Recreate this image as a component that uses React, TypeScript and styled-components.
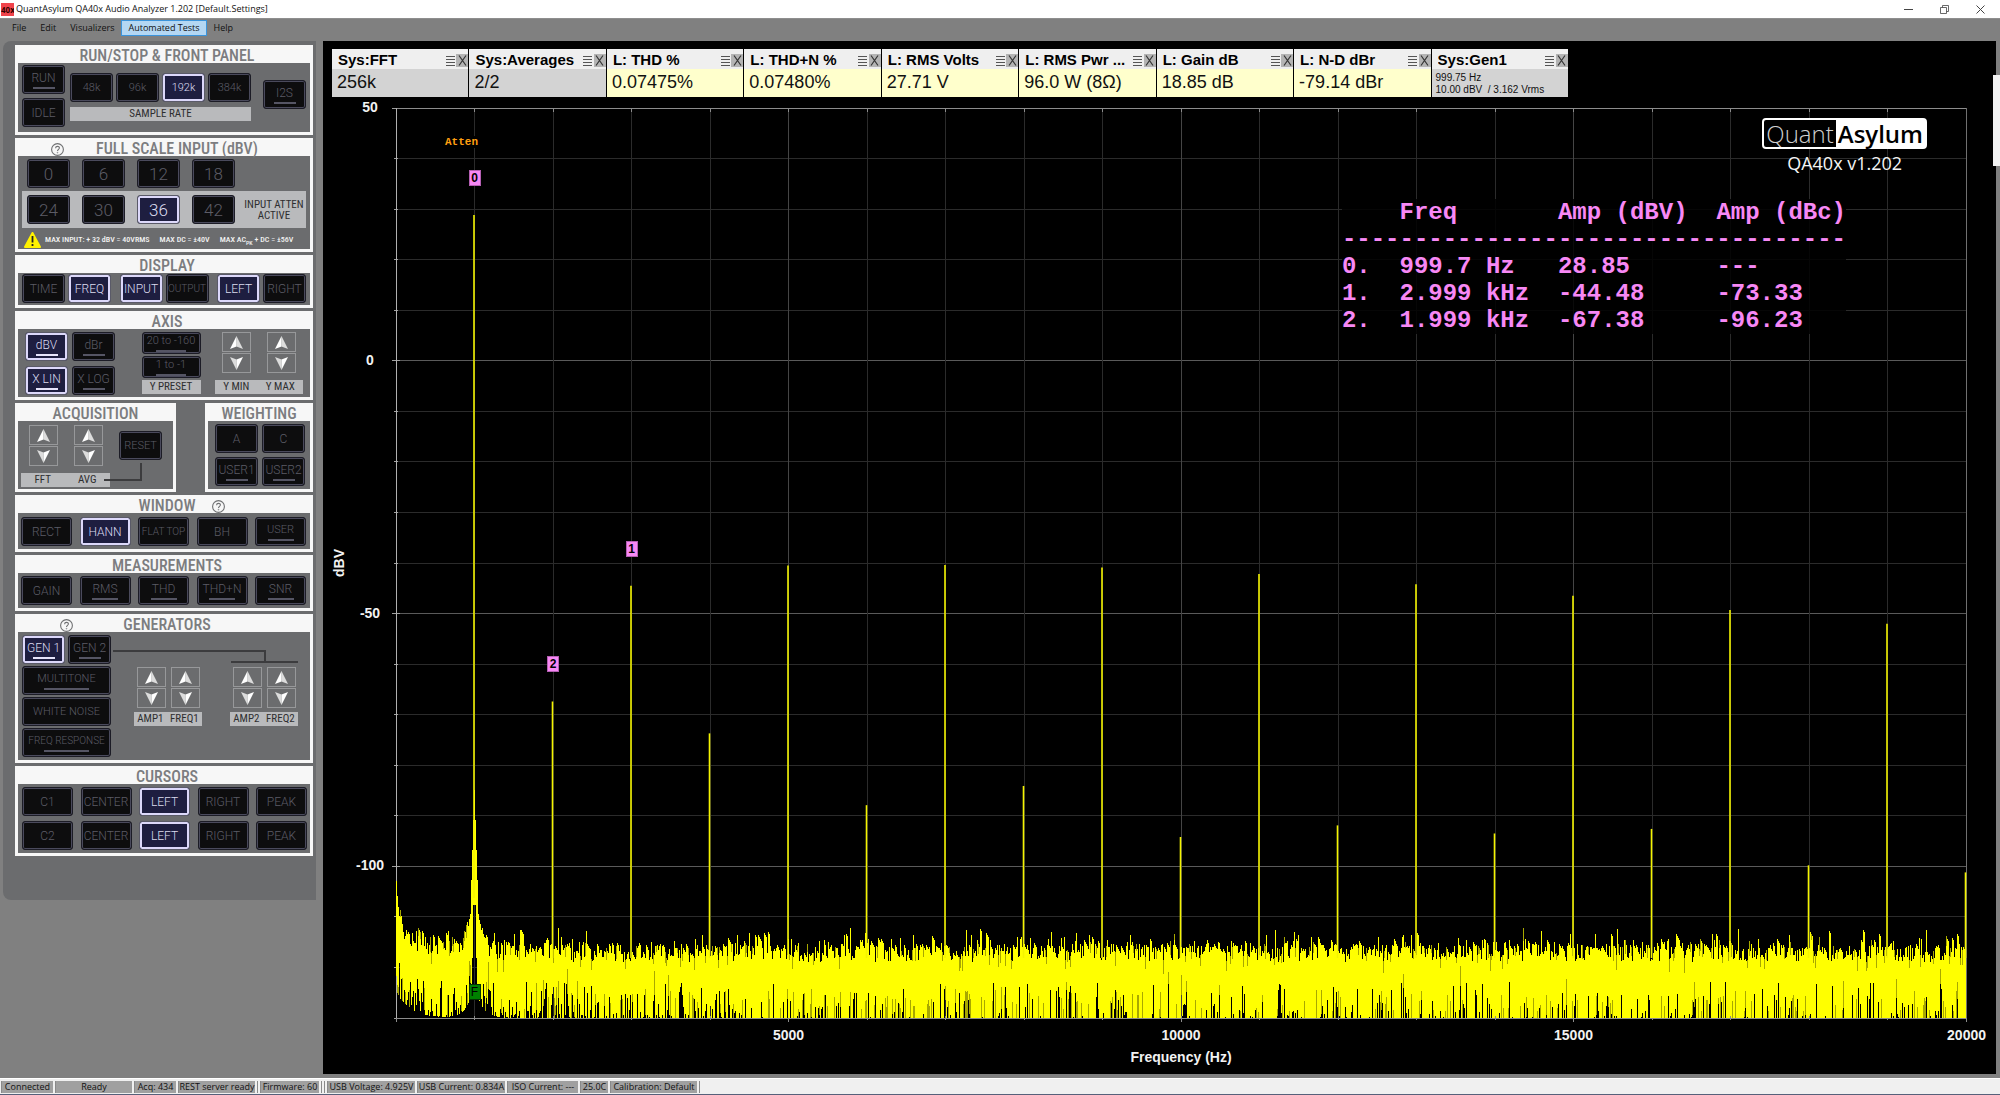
import React from "react";
import styled, { createGlobalStyle, css } from "styled-components";

const GlobalStyle = createGlobalStyle`
  * { box-sizing: border-box; }
  body { margin: 0; background: #808080; }
  button { font: inherit; padding: 0; margin: 0; border: 0; background: none; }
  h1, h2 { margin: 0; font-weight: 400; }
`;

const UI = `"Open Sans", "Noto Sans", sans-serif`;
const ARIAL = `"Liberation Sans", Arial, sans-serif`;
const NARROW = `"Liberation Sans Narrow", "Arial Narrow", "Roboto Condensed", "DejaVu Sans Condensed", sans-serif`;
const KEY = `Roboto, "Liberation Sans", sans-serif`;
const MONO = `"Liberation Mono", "Courier New", monospace`;

const Shell = styled.div`
  display: flex;
  flex-direction: column;
  min-height: 100vh;
  background: #808080;
  font-family: ${UI};
`;

/* ---------- window chrome ---------- */

const TitleBar = styled.header`
  display: flex;
  align-items: center;
  height: 18px;
  padding: 0 14px 0 1px;
  background: #fff;
`;
const AppBadge = styled.span`
  width: 13px;
  height: 13px;
  overflow: hidden;
  background: #f0434b;
  color: #300;
  font: 700 8px/13px ${UI};
  text-align: center;
`;
const Title = styled.h1`
  flex: 1;
  margin-left: 2px;
  color: #111;
  font-size: 9px;
  line-height: 18px;
`;
const WindowButtons = styled.div`
  display: flex;
  gap: 24px;
`;
const WindowButton = styled.button`
  display: flex;
  align-items: center;
  justify-content: center;
  width: 12px;
  height: 16px;
`;
const MenuBar = styled.nav`
  display: flex;
  align-items: flex-start;
  height: 23px;
  padding: 1px 5px;
  border-top: 1px solid #8e8e8e;
`;
const MenuItem = styled.button<{ $active?: boolean }>`
  height: 16px;
  padding: 0 6px;
  border: 1px solid ${(p) => (p.$active ? "#3a94dc" : "transparent")};
  background: ${(p) => (p.$active ? "#b4d7f3" : "transparent")};
  color: #111;
  font-size: 9px;
  line-height: 12px;
`;
const Main = styled.main`
  display: flex;
  flex: 1;
  gap: 7px;
  padding: 0 4px 4px 3px;
`;

/* ---------- control panel ---------- */

const Sidebar = styled.aside`
  display: flex;
  flex: none;
  flex-direction: column;
  align-self: flex-start;
  gap: 3px;
  width: 313px;
  padding: 4px 3px 44px 12px;
  border-radius: 8px 0 0 8px;
  background: #6b6c6e;
`;
const Panel = styled.section<{ $w?: number }>`
  ${(p) => (p.$w ? `width: ${p.$w}px;` : "")}
  border: 3px solid #f7f7f7;
  background: #6b6c6e;
`;
const PanelHead = styled.header<{ $indent: number }>`
  display: grid;
  grid-template-columns: 1fr auto 1fr;
  align-items: center;
  height: 15px;
  padding-left: ${(p) => p.$indent}px;
  background: #f7f7f7;
`;
const PanelTitle = styled.h2`
  grid-column: 2;
  color: #7c7d80;
  font: 500 16px/16px ${NARROW};
  white-space: nowrap;
`;
const HelpButton = styled.button<{ $side: "left" | "right"; $gap: number }>`
  display: flex;
  grid-row: 1;
  grid-column: ${(p) => (p.$side === "left" ? 1 : 3)};
  justify-self: ${(p) => (p.$side === "left" ? "end" : "start")};
  margin: ${(p) => (p.$side === "left" ? `0 ${p.$gap}px 0 0` : `0 0 0 ${p.$gap}px`)};
`;
const PanelBody = styled.div<{ $pad: string; $between?: boolean }>`
  display: flex;
  justify-content: ${(p) => (p.$between ? "space-between" : "flex-start")};
  padding: ${(p) => p.$pad};
`;
const Row = styled.div<{ $gap?: number; $pad?: string; $between?: boolean }>`
  display: flex;
  gap: ${(p) => p.$gap ?? 0}px;
  padding: ${(p) => p.$pad ?? "0"};
  justify-content: ${(p) => (p.$between ? "space-between" : "flex-start")};
`;
const Stack = styled.div<{ $gap?: number; $pad?: string; $grow?: boolean }>`
  display: flex;
  flex-direction: column;
  gap: ${(p) => p.$gap ?? 0}px;
  padding: ${(p) => p.$pad ?? "0"};
  ${(p) => (p.$grow ? "flex: 1;" : "")}
`;

const KeyCap = styled.button<{ $w: number; $h: number; $size: number; $on?: boolean; $lamp?: boolean }>`
  display: flex;
  flex: none;
  flex-direction: column;
  align-items: center;
  justify-content: center;
  gap: 2px;
  width: ${(p) => p.$w}px;
  height: ${(p) => p.$h}px;
  overflow: hidden;
  border: 1px solid ${(p) => (p.$on ? "#5a5a68" : "#1c1c26")};
  border-radius: 3px;
  background: ${(p) => (p.$on ? "#1e1e40" : "#0d0d0e")};
  box-shadow: inset 0 0 0 ${(p) => (p.$on ? 2 : 1)}px ${(p) => (p.$on ? "#dcd8fa" : "#4a4a5c")};
  color: ${(p) => (p.$on ? "#dcdcf0" : "#5c5c66")};
  font: 300 ${(p) => p.$size}px/14px ${KEY};
  white-space: nowrap;
  ${(p) =>
    p.$lamp &&
    css`
      &::after {
        content: "";
        width: ${p.$w > 80 ? 45 : p.$w === 59 ? 30 : p.$w > 50 ? 26 : 22}px;
        height: 2px;
        background: ${p.$on ? "#e6e4fa" : "#555564"};
      }
    `}
`;

const Plate = styled.div<{ $w?: number }>`
  display: flex;
  justify-content: space-around;
  ${(p) => (p.$w ? `width: ${p.$w}px;` : "")}
  height: 14px;
  background: #b9babc;
  color: #2e2e30;
  font: 400 11px/14px ${NARROW};
`;
const AttenStrip = styled.div`
  display: flex;
  align-items: center;
  gap: 12px;
  margin: 0 4px;
  padding: 4px 5px;
  background: #b9babc;
`;
const AttenText = styled.div`
  flex: 1;
  margin: 0 -5px;
  color: #2e2e30;
  font: 400 11px/11px ${NARROW};
  text-align: center;
`;
const WarningLine = styled.div`
  display: flex;
  align-items: center;
  gap: 10px;
  height: 18px;
  padding: 0 6px;
  color: #f4f4f4;
  font: 500 8px/10px ${NARROW};
  white-space: nowrap;
  & > svg { margin-right: -6px; }
`;
const Sub = styled.sub`
  font-size: 6px;
  line-height: 1px;
`;
const StepButton = styled.button`
  display: flex;
  align-items: center;
  justify-content: center;
  width: 29px;
  height: 20px;
  border: 1px solid #97989a;
`;

type KeyProps = { label: string; w?: number; h?: number; size?: number; on?: boolean; lamp?: boolean };
const Key = ({ label, w = 43, h = 29, size = 12, on, lamp }: KeyProps) => (
  <KeyCap type="button" aria-pressed={!!on} $w={w} $h={h} $size={size} $on={on} $lamp={lamp}>
    {label}
  </KeyCap>
);

const Arrow = ({ down }: { down?: boolean }) => (
  <svg width="13" height="13" viewBox="0 0 13 13" aria-hidden="true">
    <g transform={down ? "rotate(180 6.5 6.5)" : undefined}>
      <path d="M6.5 0 L13 13 L6.5 10.5 Z" fill="#dcdcdc" />
      <path d="M6.5 0 L0 13 L6.5 10.5 Z" fill="#fff" />
    </g>
  </svg>
);

const Stepper = ({ name }: { name: string }) => (
  <Stack $gap={1}>
    <StepButton type="button" aria-label={`${name} up`}>
      <Arrow />
    </StepButton>
    <StepButton type="button" aria-label={`${name} down`}>
      <Arrow down />
    </StepButton>
  </Stack>
);

const Help = ({ side, gap }: { side: "left" | "right"; gap: number }) => (
  <HelpButton type="button" aria-label="Help" $side={side} $gap={gap}>
    <svg width="13" height="13" viewBox="0 0 13 13" fill="none" stroke="#6f7072">
      <circle cx="6.5" cy="6.5" r="5.9" strokeWidth="1.1" />
      <path d="M4.6 5.2 C4.6 2.7 8.5 2.8 8.4 5 C8.3 6.3 6.5 6.4 6.5 8" strokeWidth="1.1" />
      <circle cx="6.5" cy="9.7" r=".4" strokeWidth=".7" />
    </svg>
  </HelpButton>
);

const Head = ({ title, indent = 6, children }: { title: string; indent?: number; children?: React.ReactNode }) => (
  <PanelHead $indent={indent}>
    <PanelTitle>{title}</PanelTitle>
    {children}
  </PanelHead>
);

const ControlPanel = () => (
  <Sidebar>
    <Panel>
      <Head title="RUN/STOP & FRONT PANEL" />
      <PanelBody $pad="2px 4px 5px">
        <Stack $gap={4}>
          <Key label="RUN" lamp />
          <Key label="IDLE" />
        </Stack>
        <Stack $gap={5} $pad="8px 12px 0 5px">
          <Row $gap={3}>
            <Key label="48k" size={11} />
            <Key label="96k" size={11} />
            <Key label="192k" size={11} on />
            <Key label="384k" size={11} />
          </Row>
          <Plate>SAMPLE RATE</Plate>
        </Stack>
        <Stack $pad="15px 0 0">
          <Key label="I2S" lamp />
        </Stack>
      </PanelBody>
    </Panel>

    <Panel>
      <Head title="FULL SCALE INPUT (dBV)" indent={26}>
        <Help side="left" gap={32} />
      </Head>
      <Stack $gap={3} $pad="3px 0 0">
        <Row $gap={12} $pad="0 9px">
          {["0", "6", "12", "18"].map((v) => (
            <Key key={v} label={v} size={17} />
          ))}
        </Row>
        <AttenStrip>
          {["24", "30", "36", "42"].map((v) => (
            <Key key={v} label={v} size={17} on={v === "36"} />
          ))}
          <AttenText>INPUT ATTEN ACTIVE</AttenText>
        </AttenStrip>
        <WarningLine>
          <svg width="17" height="16" viewBox="0 0 17 16" aria-hidden="true">
            <path d="M8.5 1 L16 15 L1 15 Z" fill="#fff200" stroke="#fff200" strokeWidth="2" strokeLinejoin="round" />
            <path d="M8.5 4 V10.5 M8.5 12 V14" stroke="#222" strokeWidth="1.8" />
          </svg>
          <span>MAX INPUT: + 32 dBV = 40VRMS</span>
          <span>MAX DC = ±40V</span>
          <span>
            MAX AC<Sub>PK</Sub> + DC = ±56V
          </span>
        </WarningLine>
      </Stack>
    </Panel>

    <Panel>
      <Head title="DISPLAY" />
      <PanelBody $pad="1px 4px 2px" $between>
        <Row $gap={3}>
          <Key label="TIME" />
          <Key label="FREQ" on />
        </Row>
        <Row $gap={3}>
          <Key label="INPUT" on />
          <Key label="OUTPUT" size={10} />
        </Row>
        <Row $gap={3}>
          <Key label="LEFT" on />
          <Key label="RIGHT" />
        </Row>
      </PanelBody>
    </Panel>

    <Panel>
      <Head title="AXIS" />
      <PanelBody $pad="3px 7px 2px 7px" $between>
        <Stack $gap={5}>
          <Row $gap={4}>
            <Key label="dBV" on lamp />
            <Key label="dBr" lamp />
          </Row>
          <Row $gap={4}>
            <Key label="X LIN" on lamp />
            <Key label="X LOG" lamp />
          </Row>
        </Stack>
        <Stack $gap={2} $pad="0 0 0 12px">
          <Key label="20 to -160" w={59} h={22} size={11} lamp />
          <Key label="1 to -1" w={59} h={22} size={11} lamp />
          <Plate>Y PRESET</Plate>
        </Stack>
        <Stack $gap={7}>
          <Row $pad="0 7px" $between>
            <Stepper name="Y min" />
            <Stepper name="Y max" />
          </Row>
          <Plate $w={88}>
            <span>Y MIN</span>
            <span>Y MAX</span>
          </Plate>
        </Stack>
      </PanelBody>
    </Panel>

    <Row $between>
      <Panel $w={161}>
        <Head title="ACQUISITION" indent={0} />
        <PanelBody $pad="4px 3px 2px">
          <Stack $gap={7}>
            <Row $gap={16} $pad="0 7px 0 8px">
              <Stepper name="FFT" />
              <Stepper name="Average" />
            </Row>
            <Plate $w={89}>
              <span>FFT</span>
              <span>AVG</span>
            </Plate>
          </Stack>
          <Stack $pad="6px 0 0 9px">
            <Key label="RESET" size={11} />
            <svg width="43" height="24" viewBox="0 0 43 24" overflow="visible" aria-hidden="true">
              <path d="M22 3 V20 H-15" fill="none" stroke="#3c3c3e" strokeWidth="2" />
            </svg>
          </Stack>
        </PanelBody>
      </Panel>
      <Panel $w={108}>
        <Head title="WEIGHTING" indent={0} />
        <PanelBody $pad="3px 7px 3px">
          <Stack $gap={4}>
            <Row $gap={4}>
              <Key label="A" />
              <Key label="C" />
            </Row>
            <Row $gap={4}>
              <Key label="USER1" lamp />
              <Key label="USER2" lamp />
            </Row>
          </Stack>
        </PanelBody>
      </Panel>
    </Row>

    <Panel>
      <Head title="WINDOW">
        <Help side="right" gap={17} />
      </Head>
      <PanelBody $pad="4px 4px 3px 3px" $between>
        <Key w={51} label="RECT" />
        <Key w={51} label="HANN" on />
        <Key w={51} label="FLAT TOP" size={10} />
        <Key w={51} label="BH" />
        <Key w={51} label="USER" size={11} lamp />
      </PanelBody>
    </Panel>

    <Panel>
      <Head title="MEASUREMENTS" />
      <PanelBody $pad="3px 4px 3px 3px" $between>
        <Key w={51} label="GAIN" />
        <Key w={51} label="RMS" lamp />
        <Key w={51} label="THD" lamp />
        <Key w={51} label="THD+N" lamp />
        <Key w={51} label="SNR" lamp />
      </PanelBody>
    </Panel>

    <Panel>
      <Head title="GENERATORS">
        <Help side="left" gap={50} />
      </Head>
      <PanelBody $pad="3px 11px 3px 4px">
        <Stack $gap={2}>
          <Row $gap={3}>
            <Key label="GEN 1" on lamp />
            <Key label="GEN 2" lamp />
          </Row>
          <Key w={89} label="MULTITONE" size={11} lamp />
          <Key w={89} label="WHITE NOISE" size={11} />
          <Key w={89} label="FREQ RESPONSE" size={10} lamp />
        </Stack>
        <Stack $grow $gap={4} $pad="10px 0 0 2px">
          <svg width="100%" height="18" overflow="visible" aria-hidden="true">
            <path d="M0 6 H152 V17 M118 17 H185" fill="none" stroke="#3c3c3e" strokeWidth="2" />
          </svg>
          <Row $between $pad="0 0 0 21px">
            <Stack $gap={4}>
              <Row $gap={5} $pad="0 3px">
                <Stepper name="Amp 1" />
                <Stepper name="Freq 1" />
              </Row>
              <Plate $w={68}>
                <span>AMP1</span>
                <span>FREQ1</span>
              </Plate>
            </Stack>
            <Stack $gap={4}>
              <Row $gap={5} $pad="0 3px">
                <Stepper name="Amp 2" />
                <Stepper name="Freq 2" />
              </Row>
              <Plate $w={68}>
                <span>AMP2</span>
                <span>FREQ2</span>
              </Plate>
            </Stack>
          </Row>
        </Stack>
      </PanelBody>
    </Panel>

    <Panel>
      <Head title="CURSORS" />
      <Stack $gap={5} $pad="3px 3px 3px 4px">
        {["C1", "C2"].map((c) => (
          <Row key={c} $between>
            <Key w={51} label={c} />
            <Key w={51} label="CENTER" />
            <Key w={51} label="LEFT" on />
            <Key w={51} label="RIGHT" />
            <Key w={51} label="PEAK" />
          </Row>
        ))}
      </Stack>
    </Panel>
  </Sidebar>
);

/* ---------- read-out cards ---------- */

const Scope = styled.section`
  position: relative;
  display: flex;
  flex: 1;
  flex-direction: column;
  min-width: 0;
  background: #000;
`;
const Cards = styled.div`
  display: grid;
  grid-template-columns: repeat(9, 1fr);
  gap: 1px;
  max-width: 1254px;
  padding: 8px 9px 11px;
`;
const Card = styled.article`
  display: flex;
  flex-direction: column;
  min-width: 0;
  height: 48px;
`;
const CardHead = styled.header`
  display: flex;
  align-items: center;
  height: 20px;
  padding: 2px 0 0 6px;
  background: #efefef;
`;
const CardTitle = styled.h2`
  flex: 1;
  overflow: hidden;
  color: #000;
  font: 700 15px/18px ${ARIAL};
  white-space: nowrap;
`;
const CardButton = styled.button<{ $boxed?: boolean }>`
  display: flex;
  align-items: center;
  justify-content: center;
  width: 12px;
  height: 13px;
  background: ${(p) => (p.$boxed ? "#b4b4b4" : "transparent")};
`;
const CardValue = styled.div<{ $tone: "gray" | "yellow"; $small?: boolean }>`
  flex: 1;
  padding: ${(p) => (p.$small ? "3px 4px 0" : "0 5px")};
  background: ${(p) => (p.$tone === "gray" ? "#d3d3d3" : "#ffffcc")};
  color: #111;
  font: 400 ${(p) => (p.$small ? "10px/12px" : "18px/26px")} ${ARIAL};
  white-space: pre;
`;

const cards: { title: string; value: string; gray?: boolean; small?: boolean }[] = [
  { title: "Sys:FFT", value: "256k", gray: true },
  { title: "Sys:Averages", value: "2/2", gray: true },
  { title: "L: THD %", value: "0.07475%" },
  { title: "L: THD+N %", value: "0.07480%" },
  { title: "L: RMS Volts", value: "27.71 V" },
  { title: "L: RMS Pwr ...", value: "96.0 W (8Ω)" },
  { title: "L: Gain dB", value: "18.85 dB" },
  { title: "L: N-D dBr", value: "-79.14 dBr" },
  { title: "Sys:Gen1", value: "999.75 Hz\n10.00 dBV  / 3.162 Vrms", gray: true, small: true },
];

/* ---------- spectrum ---------- */

const Graph = styled.div`
  display: grid;
  flex: 1;
  grid-template-columns: 32px 30px 1fr;
  grid-template-rows: 1fr 56px;
  padding-right: 30px;
`;
const AxisName = styled.div<{ $vertical?: boolean }>`
  color: #f2f2f2;
  font: 700 14px/16px ${ARIAL};
  text-align: center;
  ${(p) => (p.$vertical ? "align-self: center; justify-self: center; writing-mode: vertical-rl; rotate: 180deg;" : "")}
`;
const YTicks = styled.div`
  display: grid;
  grid-template-rows: 50fr 50fr 50fr 30fr;
  color: #f2f2f2;
  font: 700 14px/16px ${ARIAL};
  text-align: center;
  margin-top: -9px;
  margin-bottom: 9px;
`;
const PlotCell = styled.div`
  position: relative;
  margin-left: 11px;
`;
const PlotSvg = styled.svg`
  position: absolute;
  inset: 0;
  width: 100%;
  height: 100%;
  overflow: visible;
`;
const XAxis = styled.div`
  grid-column: 3;
  margin-left: 11px;
  padding-top: 9px;
`;
const XTicks = styled.div`
  display: grid;
  grid-template-columns: 1fr 2fr 2fr 2fr 1fr;
  margin-bottom: 6px;
  color: #f2f2f2;
  font: 700 14px/16px ${ARIAL};
  text-align: center;
  & > :last-child { margin-right: -20px; text-align: right; }
`;
const Marker = styled.span<{ $tone?: "green" }>`
  position: absolute;
  min-width: 12px;
  height: 16px;
  transform: translate(-50%, -50%);
  border: 1px solid ${(p) => (p.$tone ? "#033203" : "#b45fb2")};
  background: ${(p) => (p.$tone ? "#008000" : "#f788f5")};
  color: #000;
  font: ${(p) => (p.$tone ? 400 : 700)} 12px/14px ${ARIAL};
  text-align: center;
`;
const Atten = styled.span`
  position: absolute;
  top: 28px;
  left: 49px;
  background: #000;
  color: #ff9f10;
  font: 700 11px/12px ${MONO};
`;
const Brand = styled.div`
  position: absolute;
  top: 10px;
  right: 39px;
  display: flex;
  flex-direction: column;
  align-items: center;
  color: #f4f4f4;
  font: 400 18px/28px ${UI};
`;
const Logo = styled.div`
  display: flex;
  border: 2px solid #fff;
  border-radius: 4px;
  background: #000;
  font: 300 24px/27px ${UI};
`;
const LogoLeft = styled.span`
  padding: 0 2px;
  color: #cfcfcf;
`;
const LogoRight = styled.span`
  padding: 0 2px;
  background: #fff;
  color: #000;
  font-weight: 600;
`;
const Peaks = styled.table`
  position: absolute;
  top: 91px;
  right: 120px;
  border-collapse: collapse;
  background: rgba(0, 0, 0, 0.85);
  color: #f788f5;
  font: 700 24px/27px ${MONO};
  text-align: left;
  white-space: pre;
  th, td { padding: 0; font-weight: 700; }
`;
const ScrollThumb = styled.div`
  position: absolute;
  top: 34px;
  right: -4px;
  width: 7px;
  height: 91px;
  background: #f2f2f2;
`;

const W = 1570;
const H = 910;
const yOf = (db: number) => ((50 - db) / 180) * H;
const xOf = (khz: number) => (khz / 20) * W;

// Level in dBV at each whole kHz, starting at 1 kHz.
const harmonics = [
  28.85, -67.38, -44.48, -73.7, -40.5, -87.9, -40.4, -84.1, -40.9, -94.2,
  -42.2, -91.9, -44.2, -93.5, -46.5, -92.6, -49.3, -99.8, -52, -101.2,
];

const buildNoise = () => {
  let seed = 20231;
  const rnd = () => {
    seed = (seed * 1664525 + 1013904223) >>> 0;
    return seed / 4294967296;
  };
  let solid = "";
  let dim = "";
  let last = 842;
  for (let i = 0; i < W; i++) {
    const d = Math.abs(i - 78);
    const fresh = 845 + (rnd() - 0.5) * 18 - Math.pow(rnd(), 6) * 18;
    // Neighbouring bins share a level about a third of the time.
    const level = rnd() < 0.35 ? Math.min(fresh, last + 2) : fresh;
    last = level;
    let top = level - 42 * Math.exp(-i / 3) - 22 * Math.exp(-i / 22) - 14 * Math.exp(-d / 14);
    if (d < 12) top = Math.min(top, 793 + d * 3 + rnd() * 8);
    if (d < 4) top = Math.min(top, 742 + (d - 2) * 30);
    const floor = 0.35 + 0.4 * Math.min(1, i / 500);
    let bottom = rnd() < floor ? 910 : 910 - Math.pow(rnd(), 2) * 36;
    bottom -= 26 * Math.exp(-i / 14) + 34 * Math.exp(-d / 7);
    if (d < 3) bottom = d < 2 ? 797 : 850;
    const x = i + 0.5;
    solid += `M${x} ${top.toFixed(1)}V${bottom.toFixed(1)}`;
    if (rnd() < 0.25 && d > 3) {
      dim +=
        rnd() < 0.4
          ? `M${x} ${top.toFixed(1)}V${(top + 5 + rnd() * 10).toFixed(1)}`
          : `M${x} ${(bottom - 6 - rnd() * 22).toFixed(1)}V${bottom.toFixed(1)}`;
    }
  }
  return { solid, dim };
};
const noise = buildNoise();

const steps = (n: number) => Array.from({ length: n }, (_, i) => i);

const Spectrum = () => (
  <PlotSvg viewBox={`0 0 ${W} ${H}`} preserveAspectRatio="none" role="img" aria-label="FFT spectrum">
    <g shapeRendering="crispEdges" fill="none">
      {steps(19).map((i) => {
        const major = i % 5 === 0;
        const y = yOf(50 - i * 10);
        return (
          <g key={i}>
            <path d={`M0 ${y}H${W}`} stroke={major ? "#5a5a5a" : "#2b2b2b"} />
            <path d={`M${major ? -4 : -2} ${y}H${major ? 4 : 2}`} stroke="#a0a0a0" />
          </g>
        );
      })}
      {steps(21).map((k) => (
        <path key={k} d={`M${xOf(k)} 0V${H + (k % 5 ? 2 : 4)}`} stroke={k % 5 ? "#2b2b2b" : "#454545"} />
      ))}
      {steps(21).map((k) => (
        <path key={k} d={`M${xOf(k)} 0V4M${xOf(k)} ${H - 2}V${H + (k % 5 ? 2 : 4)}`} stroke="#8c8c8c" />
      ))}
      <path d={`M0 0H${W}M0 ${H}H${W}`} stroke="#8c8c8c" />
      <path d={`M0 0V${H}`} stroke="#b0b0b0" />
      <path d={`M${W} 0V${H}`} stroke="#707070" />
      <path d={noise.solid} stroke="#ffff00" />
      <path d={noise.dim} stroke="#a8a800" />
    </g>
    {harmonics.map((db, i) => (
      <path key={i} d={`M${xOf(i + 1) - 0.5} ${yOf(db)}V${H - (i === 0 ? 120 : 60)}`} stroke="#f4f400" strokeWidth="1.6" />
    ))}
  </PlotSvg>
);

const peaks = [
  ["0.", "999.7 Hz", "28.85", "---"],
  ["1.", "2.999 kHz", "-44.48", "-73.33"],
  ["2.", "1.999 kHz", "-67.38", "-96.23"],
];

const markers = [
  { label: "0", khz: 1, y: 70 },
  { label: "1", khz: 3, y: 441 },
  { label: "2", khz: 2, y: 556 },
];
const place = (khz: number, y: number) => ({ left: `${khz * 5}%`, top: `${(y / H) * 100}%` });

const Chart = () => (
  <Graph>
    <AxisName $vertical>dBV</AxisName>
    <YTicks>
      {["50", "0", "-50", "-100"].map((t) => (
        <span key={t}>{t}</span>
      ))}
    </YTicks>
    <PlotCell>
      <Spectrum />
      <Atten>Atten</Atten>
      {markers.map((m) => (
        <Marker key={m.label} style={place(m.khz, m.y)}>
          {m.label}
        </Marker>
      ))}
      <Marker $tone="green" style={place(1, 884)}>
        F
      </Marker>
      <Brand>
        <Logo>
          <LogoLeft>Quant</LogoLeft>
          <LogoRight>Asylum</LogoRight>
        </Logo>
        QA40x v1.202
      </Brand>
      <Peaks>
        <thead>
          <tr>
            <th>{"    "}</th>
            <th>{"Freq       "}</th>
            <th>{"Amp (dBV)  "}</th>
            <th>Amp (dBc)</th>
          </tr>
        </thead>
        <tbody>
          <tr>
            <td colSpan={4}>{"-".repeat(35)}</td>
          </tr>
          {peaks.map((r) => (
            <tr key={r[0]}>
              {r.map((c) => (
                <td key={c}>{c}</td>
              ))}
            </tr>
          ))}
        </tbody>
      </Peaks>
    </PlotCell>
    <XAxis>
      <XTicks>
        <span />
        <span>5000</span>
        <span>10000</span>
        <span>15000</span>
        <span>20000</span>
      </XTicks>
      <AxisName>Frequency (Hz)</AxisName>
    </XAxis>
  </Graph>
);

/* ---------- status bar ---------- */

const StatusBar = styled.footer`
  display: flex;
  gap: 2px;
  height: 17px;
  padding: 2px 1px 1px;
  border-top: 1px solid #fff;
  border-bottom: 1px solid #56607a;
  background: #f0f0f0;
`;
const StatusItem = styled.div<{ $w: number }>`
  width: ${(p) => p.$w}px;
  border-left: 1px solid #8a8a8a;
  background: #a0a0a0;
  color: #111;
  font-size: 9px;
  line-height: 12px;
  text-align: center;
  white-space: nowrap;
`;
const status: [string, number][] = [
  ["Connected", 52],
  ["Ready", 77],
  ["Acq: 434", 42],
  ["REST server ready", 77],
  ["", 1],
  ["Firmware: 60", 59],
  ["", 1],
  ["", 1],
  ["USB Voltage: 4.925V", 88],
  ["USB Current: 0.834A", 88],
  ["ISO Current: ---", 71],
  ["25.0C", 28],
  ["Calibration: Default", 87],
  ["", 1],
];

export default function App() {
  return (
    <Shell>
      <GlobalStyle />
      <TitleBar>
        <AppBadge>40x</AppBadge>
        <Title>QuantAsylum QA40x Audio Analyzer 1.202 [Default.Settings]</Title>
        <WindowButtons>
          <WindowButton type="button" aria-label="Minimize">
            <svg width="9" height="9" viewBox="0 0 9 9"><path d="M0 4.5H9" stroke="#444" /></svg>
          </WindowButton>
          <WindowButton type="button" aria-label="Restore">
            <svg width="9" height="9" viewBox="0 0 9 9" fill="none" stroke="#444" strokeWidth=".8">
              <path d="M.5 2.5H6.5V8.5H.5ZM2.5 2.5V.5H8.5V6.5H6.5" />
            </svg>
          </WindowButton>
          <WindowButton type="button" aria-label="Close">
            <svg width="9" height="9" viewBox="0 0 9 9"><path d="M.5 .5L8.5 8.5M8.5 .5L.5 8.5" stroke="#444" /></svg>
          </WindowButton>
        </WindowButtons>
      </TitleBar>
      <MenuBar>
        {["File", "Edit", "Visualizers", "Automated Tests", "Help"].map((m) => (
          <MenuItem key={m} type="button" $active={m === "Automated Tests"}>
            {m}
          </MenuItem>
        ))}
      </MenuBar>
      <Main>
        <ControlPanel />
        <Scope>
          <Cards>
            {cards.map((c) => (
              <Card key={c.title}>
                <CardHead>
                  <CardTitle>{c.title}</CardTitle>
                  <CardButton type="button" aria-label="Options">
                    <svg width="9" height="11" viewBox="0 0 9 11">
                      <path d="M0 1.5H9M0 4.5H9M0 7.5H9M0 10.5H9" stroke="#555" />
                    </svg>
                  </CardButton>
                  <CardButton type="button" aria-label="Close" $boxed>
                    <svg width="9" height="11" viewBox="0 0 9 11">
                      <path d="M1 .5L8 10.5M8 .5L1 10.5" stroke="#333" strokeWidth="1.2" />
                    </svg>
                  </CardButton>
                </CardHead>
                <CardValue $tone={c.gray ? "gray" : "yellow"} $small={c.small}>
                  {c.value}
                </CardValue>
              </Card>
            ))}
          </Cards>
          <Chart />
          <ScrollThumb />
        </Scope>
      </Main>
      <StatusBar>
        {status.map(([text, w], i) => (
          <StatusItem key={i} $w={w}>
            {text}
          </StatusItem>
        ))}
      </StatusBar>
    </Shell>
  );
}
